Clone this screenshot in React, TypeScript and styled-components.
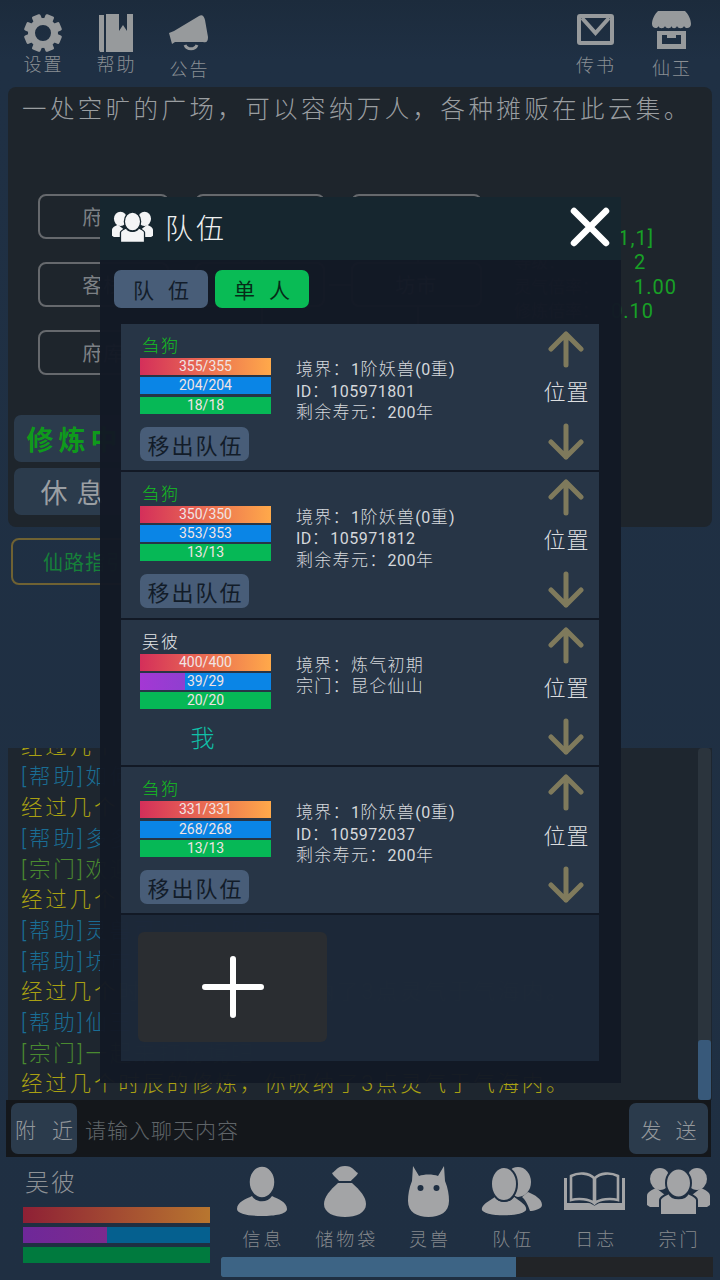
import React from "react";
import styled, { createGlobalStyle } from "styled-components";

const cjk = `Roboto, "Noto Sans CJK SC", sans-serif`;

const Global = createGlobalStyle`
  html, body { margin: 0; padding: 0; background: #1f2f42; }
  * { box-sizing: border-box; }
  body { font-family: ${cjk}; }
`;

const Page = styled.div`
  position: relative;
  width: 720px;
  height: 1280px;
  overflow: hidden;
  display: flex;
  flex-direction: column;
  background: linear-gradient(#1c2b3c, #1f3044 60px, #1f2f42);
`;

/* top bar */
const TopBar = styled.header`
  height: 87px;
  flex: none;
  display: flex;
  justify-content: space-between;
  padding: 0 11px 0 6px;
`;
const TopGroup = styled.div`
  display: flex;
`;
const TopItem = styled.div<{ $w: number; $pt: number; $gap: number }>`
  width: ${(p) => p.$w}px;
  padding-top: ${(p) => p.$pt}px;
  display: flex;
  flex-direction: column;
  align-items: center;
  gap: ${(p) => p.$gap}px;
`;
const TopLabel = styled.span`
  font-size: 18px;
  line-height: 22px;
  letter-spacing: 2px;
  margin-right: -2px;
  color: #8a8f94;
  font-weight: 300;
`;

/* scene */
const Scene = styled.section`
  height: 440px;
  flex: none;
  margin: 0 8px;
  background: #1e252c;
  border-radius: 8px;
  padding-top: 8px;
  display: flex;
  flex-direction: column;
`;
const Description = styled.p`
  margin: 0;
  padding-left: 14px;
  height: 99px;
  font-size: 24.5px;
  line-height: 30px;
  letter-spacing: 3.4px;
  white-space: nowrap;
  color: #9a9ea1;
  font-weight: 300;
`;
const MapRow = styled.div`
  display: flex;
  height: 181px;
`;
const MapGrid = styled.div`
  display: grid;
  grid-template-columns: repeat(3, 130.5px);
  grid-template-rows: 45px 45px 45px;
  column-gap: 26px;
  row-gap: 23px;
  margin-left: 30px;
  width: 474px;
`;
const MapNode = styled.div<{ $linkLeft?: boolean; $linkDown?: boolean }>`
  position: relative;
  border: 2px solid #66696d;
  border-radius: 8px;
  display: flex;
  align-items: center;
  justify-content: center;
  font-size: 20px;
  letter-spacing: 1px;
  color: #7c8084;
  &::before {
    content: ${(p) => (p.$linkLeft ? '""' : "none")};
    position: absolute;
    left: -24px;
    top: 20px;
    width: 22px;
    height: 2px;
    background: #66696d;
  }
  &::after {
    content: ${(p) => (p.$linkDown ? '""' : "none")};
    position: absolute;
    left: 64px;
    bottom: -25px;
    width: 2px;
    height: 23px;
    background: #66696d;
  }
`;
const Stats = styled.div`
  margin-top: 31.5px;
  margin-left: 2px;
  display: flex;
  flex-direction: column;
`;
const Stat = styled.div`
  display: flex;
  height: 24.5px;
  line-height: 24.5px;
  font-size: 20px;
  white-space: nowrap;
`;
const StatLabel = styled.span`
  width: 106px;
  font-size: 17px;
  color: #5a5e62;
`;
const StatValue = styled.span<{ $shift: number }>`
  margin-left: ${(p) => p.$shift}px;
  letter-spacing: 1px;
  color: #18a026;
`;
const ActionRow = styled.div`
  margin: 40px 0 0 6px;
  display: flex;
  gap: 120px;
`;
const ActionColumn = styled.div`
  display: flex;
  flex-direction: column;
  gap: 6px;
`;
const ActionButton = styled.div<{ $active?: boolean; $spacing: number }>`
  width: 116px;
  height: 47px;
  border-radius: 7px;
  background: #2b3b4c;
  display: flex;
  align-items: center;
  justify-content: center;
  font-size: 27px;
  font-weight: ${(p) => (p.$active ? 700 : 400)};
  letter-spacing: ${(p) => p.$spacing}px;
  text-indent: ${(p) => p.$spacing}px;
  color: ${(p) => (p.$active ? "#0f9a1c" : "#9b9fa3")};
  white-space: nowrap;
`;
const WideAction = styled(ActionButton)`
  width: 200px;
  font-size: 20px;
  color: #62676b;
  font-weight: 400;
`;

/* middle */
const Middle = styled.section`
  height: 221px;
  flex: none;
  padding: 11px 0 0 11px;
`;
const GoldButton = styled.div`
  width: 170px;
  height: 47px;
  border: 2px solid #6f6233;
  border-radius: 8px;
  display: flex;
  align-items: center;
  padding-left: 30px;
  font-size: 20px;
  letter-spacing: 1px;
  color: #16803a;
`;

/* chat */
const Chat = styled.section`
  height: 352px;
  flex: none;
  margin: 0 8px;
  display: flex;
  background: #1e262f;
`;
const Log = styled.div`
  flex: 1;
  overflow: hidden;
  display: flex;
  flex-direction: column;
  justify-content: flex-end;
  padding-left: 13px;
`;
const LogLine = styled.div<{ $kind: "sys" | "help" | "sect" }>`
  height: 30.7px;
  flex: none;
  line-height: 30.7px;
  font-size: 21.5px;
  letter-spacing: 2.8px;
  white-space: nowrap;
  font-weight: 300;
  color: ${(p) => (p.$kind === "sys" ? "#a9a012" : p.$kind === "help" ? "#1a6d94" : "#4a8a30")};
`;
const Track = styled.div`
  width: 13px;
  margin-right: 1px;
  background: #2b343d;
  display: flex;
  align-items: flex-end;
  border-radius: 4px;
`;
const Thumb = styled.div`
  width: 100%;
  height: 60px;
  background: #38597a;
  border-radius: 3px;
`;

/* input */
const InputBar = styled.section`
  height: 57px;
  flex: none;
  margin: 0 9px 0 6px;
  padding: 3px 3px 3px 5px;
  background: #14171b;
  display: flex;
  align-items: stretch;
`;
const InputButton = styled.div<{ $w: number; $spacing: number }>`
  width: ${(p) => p.$w}px;
  flex: none;
  border-radius: 7px;
  background: #2b3b4c;
  display: flex;
  align-items: center;
  justify-content: center;
  font-size: 21px;
  letter-spacing: ${(p) => p.$spacing}px;
  text-indent: ${(p) => p.$spacing}px;
  color: #94989c;
  white-space: nowrap;
  font-weight: 300;
`;
const Placeholder = styled.div`
  flex: 1;
  padding-left: 8px;
  display: flex;
  align-items: center;
  font-size: 21px;
  letter-spacing: 1px;
  color: #5f6468;
  font-weight: 300;
`;

/* bottom */
const Bottom = styled.footer`
  flex: 1;
  display: flex;
`;
const Player = styled.div`
  width: 221px;
  flex: none;
  padding: 10px 0 0 23px;
`;
const PlayerName = styled.div`
  font-size: 24px;
  line-height: 32px;
  letter-spacing: 2px;
  padding-left: 2px;
  color: #8e9296;
  font-weight: 300;
`;
const PlayerBars = styled.div`
  margin-top: 8px;
  width: 187px;
  display: flex;
  flex-direction: column;
  gap: 4px;
`;
const PlayerBar = styled.div<{ $bg: string }>`
  height: 16px;
  background: ${(p) => p.$bg};
`;
const Nav = styled.div`
  flex: 1;
  display: flex;
  flex-direction: column;
`;
const NavItems = styled.div`
  display: grid;
  grid-template-columns: repeat(6, 83.2px);
  height: 100px;
  margin-left: -0.5px;
`;
const NavItem = styled.div`
  display: flex;
  flex-direction: column;
  align-items: center;
  padding-top: 8px;
`;
const NavIconBox = styled.div`
  height: 52px;
  display: flex;
  align-items: center;
  justify-content: center;
`;
const NavLabel = styled.span`
  margin-top: 12px;
  font-size: 18px;
  line-height: 22px;
  letter-spacing: 3px;
  margin-right: -3px;
  color: #85898d;
  white-space: nowrap;
  font-weight: 300;
`;
const NavScroll = styled.div`
  width: 492px;
  height: 20px;
  background: #222427;
`;
const NavThumb = styled.div`
  width: 295px;
  height: 100%;
  background: #3d6485;
  border-radius: 2px 0 0 2px;
`;

/* modal */
const Modal = styled.div`
  position: absolute;
  left: 100px;
  top: 197px;
  width: 521px;
  height: 886px;
  display: flex;
  flex-direction: column;
  background: rgba(18, 25, 37, 0.975);
`;
const ModalHeader = styled.div`
  height: 63px;
  flex: none;
  background: #16262f;
  display: flex;
  align-items: center;
  padding: 0 11px 3px 12px;
`;
const ModalTitle = styled.h2`
  margin: 0 0 0 12px;
  flex: 1;
  font-size: 28px;
  font-weight: 300;
  letter-spacing: 3px;
  color: #eef0f1;
`;
const ModalBody = styled.div`
  flex: 1;
  padding: 10px 0 0 14px;
`;
const Tabs = styled.div`
  display: flex;
  gap: 7px;
`;
const Tab = styled.div<{ $on?: boolean }>`
  width: 94px;
  height: 38px;
  border-radius: 7px;
  background: ${(p) => (p.$on ? "#09bb55" : "#485d78")};
  color: ${(p) => (p.$on ? "#062a18" : "#131d2b")};
  display: flex;
  align-items: center;
  justify-content: center;
  font-size: 21px;
  letter-spacing: 14px;
  text-indent: 14px;
  white-space: nowrap;
`;
const Rows = styled.div`
  margin: 16px 0 0 7px;
  width: 478px;
  display: flex;
  flex-direction: column;
  gap: 2px;
`;
const Row = styled.div`
  height: 145.75px;
  background: #273546;
  display: flex;
`;
const EmptyRow = styled.div`
  height: 145.75px;
  background: rgba(36, 52, 72, 0.55);
  padding: 17px 0 0 17px;
`;
const AddButton = styled.div`
  width: 189px;
  height: 110px;
  background: #2a2d31;
  border-radius: 6px;
  display: flex;
  align-items: center;
  justify-content: center;
`;
const Left = styled.div`
  width: 175px;
  flex: none;
  padding: 10px 0 0 19px;
`;
const MemberName = styled.div<{ $me?: boolean }>`
  height: 24px;
  line-height: 24px;
  padding-left: 2px;
  font-size: 17px;
  letter-spacing: 2px;
  color: ${(p) => (p.$me ? "#e4e6e8" : "#14c020")};
  font-weight: 300;
`;
const Bars = styled.div`
  width: 131px;
  display: flex;
  flex-direction: column;
  gap: 2.3px;
`;
const Bar = styled.div<{ $bg: string }>`
  position: relative;
  height: 17px;
  background: ${(p) => p.$bg};
  display: flex;
  align-items: center;
  justify-content: center;
  font-size: 14px;
  line-height: 17px;
  color: #f0e4e4;
`;
const BarFill = styled.div`
  position: absolute;
  left: 0;
  top: 0;
  bottom: 0;
  background: linear-gradient(90deg, #a437d4, #8f3fd0);
`;
const BarText = styled.span`
  position: relative;
`;
const RemoveButton = styled.div`
  margin-top: 13px;
  width: 109px;
  height: 34px;
  border-radius: 7px;
  background: #485d78;
  display: flex;
  align-items: center;
  justify-content: center;
  font-size: 22px;
  letter-spacing: 2px;
  text-indent: 2px;
  color: #121c29;
  white-space: nowrap;
`;
const MeTag = styled.div`
  margin-top: 7px;
  width: 125px;
  height: 40px;
  display: flex;
  align-items: center;
  justify-content: center;
  font-size: 24px;
  color: #10c0a8;
  font-weight: 300;
`;
const Info = styled.div`
  flex: 1;
  padding-top: 35px;
  font-size: 17px;
  line-height: 21.5px;
  letter-spacing: 1.3px;
  color: #d5d8dc;
  white-space: nowrap;
  font-weight: 300;
`;
const InfoLine = styled.div`
  height: 21.5px;
`;
const Num = styled.span`
  font-size: 16px;
  letter-spacing: 0.5px;
  font-weight: 400;
`;
const Position = styled.div`
  width: 60px;
  margin-right: 3px;
  flex: none;
  display: flex;
  flex-direction: column;
  align-items: center;
  justify-content: space-between;
  padding: 6px 0 9px;
`;
const PositionLabel = styled.span`
  font-size: 22px;
  line-height: 26px;
  letter-spacing: 1px;
  margin: 0 -1px 4px 0;
  color: #dcdee0;
  font-weight: 300;
`;

/* icons */
const GREY = "#979a9c";
const NAVG = "#a3a4a6";
const BG = "#1f2f42";

const Gear = () => (
  <svg width="40" height="38" viewBox="-20 -19 40 38" style={{ display: "block" }}>
    {[0, 45, 90, 135, 180, 225, 270, 315].map((a) => (
      <rect key={a} x="-4.5" y="-19" width="9" height="10" rx="1.5" fill={GREY} transform={`rotate(${a + 22.5})`} />
    ))}
    <circle r="11.5" fill="none" stroke={GREY} strokeWidth="7" />
  </svg>
);
const HelpBook = () => (
  <svg width="34" height="38" viewBox="0 0 34 38" style={{ display: "block" }}>
    <path d="M0 1 H5 V38 H1 L0 36Z" fill={GREY} />
    <path d="M7 0 H20 V17 L24 11 L28 17 V0 H34 V38 H7Z" fill={GREY} />
  </svg>
);
const Horn = () => (
  <svg width="40" height="36" viewBox="0 0 40 36" style={{ display: "block" }}>
    <path d="M0 18 L5 16 L30 1 C33 -1 35 1 36 5 L39 22 C39 26 38 28 34 27 L6 27 L3 29Z" fill={GREY} />
    <path d="M16 30 C18 35 26 35 28 30" fill="none" stroke={GREY} strokeWidth="3" />
  </svg>
);
const Mail = () => (
  <svg width="37" height="31" viewBox="0 0 37 31" style={{ display: "block" }}>
    <rect x="2" y="2" width="33" height="27" rx="1" fill="none" stroke={GREY} strokeWidth="4" />
    <path d="M5 4 L18.5 19 L32 4" fill="none" stroke={GREY} strokeWidth="4" />
  </svg>
);
const Store = () => (
  <svg width="39" height="38" viewBox="0 0 39 38" style={{ display: "block" }}>
    <path d="M6 0 H33 C36 3 39 8 39 13 C39 18 33 18 32 15 C31 18 26 18 25 15 C24 18 20 18 19.5 15 C19 18 14 18 13 15 C12 18 7 18 6.5 15 C6 18 0 18 0 13 C0 8 3 3 6 0Z" fill={GREY} />
    <path fillRule="evenodd" d="M5 20 H34 V38 H5Z M10 24 V33 H29 V24 H24 V27 H15 V24Z" fill={GREY} />
  </svg>
);
const UpArrow = ({ down }: { down?: boolean }) => (
  <svg width="36" height="38" viewBox="0 0 36 38" style={{ display: "block", transform: down ? "rotate(180deg)" : undefined }}>
    <path d="M18 35 V4 M3 19 L18 4 L33 19" fill="none" stroke="#7f7a5c" strokeWidth="5" strokeLinecap="round" strokeLinejoin="round" />
  </svg>
);
const CloseX = () => (
  <svg width="40" height="40" viewBox="0 0 40 40" style={{ display: "block" }}>
    <path d="M4 4 L36 36 M36 4 L4 36" stroke="#fff" strokeWidth="6.5" strokeLinecap="round" />
  </svg>
);
const Plus = () => (
  <svg width="62" height="62" viewBox="0 0 62 62" style={{ display: "block" }}>
    <path d="M31 3 V59 M3 31 H59" stroke="#fff" strokeWidth="6" strokeLinecap="round" />
  </svg>
);
const Group3 = ({ w, h, fill, gap }: { w: number; h: number; fill: string; gap: string }) => (
  <svg width={w} height={h} viewBox="0 0 63 47" style={{ display: "block" }}>
    <ellipse cx="13" cy="11" rx="10" ry="11" fill={fill} />
    <ellipse cx="50" cy="11" rx="10" ry="11" fill={fill} />
    <path d="M0 37 V28 C0 24 5 22 9 20 L18 27 L12 39 L3 39Z" fill={fill} />
    <path d="M63 37 V28 C63 24 58 22 54 20 L45 27 L51 39 L60 39Z" fill={fill} />
    <path d="M13 47 V32 C13 29 18 27 22 25 C25 32 38 32 41 25 C45 27 50 29 50 32 V47Z" fill={fill} stroke={gap} strokeWidth="2" />
    <ellipse cx="31.5" cy="15" rx="12.5" ry="14.5" fill={fill} stroke={gap} strokeWidth="2" />
  </svg>
);
const Person = () => (
  <svg width="50" height="50" viewBox="0 0 50 50" style={{ display: "block" }}>
    <path d="M0 43 C0 36 9 33 15 30 C19 37 31 37 35 30 C41 33 50 36 50 43 C50 48 38 50 25 50 C12 50 0 48 0 43Z" fill={NAVG} />
    <ellipse cx="25" cy="16" rx="13" ry="16" fill={NAVG} stroke={BG} strokeWidth="1.5" />
  </svg>
);
const Bag = () => (
  <svg width="42" height="51" viewBox="0 0 42 51" style={{ display: "block" }}>
    <path d="M14 17 C6 24 0 31 0 38 C0 47 10 51 21 51 C32 51 42 47 42 38 C42 31 36 24 28 17Z" fill={NAVG} />
    <path d="M8 7 C12 5 13 0 21 0 C29 0 30 5 34 7 C32 11 28 13 27 15 H15 C14 13 10 11 8 7Z" fill={NAVG} />
  </svg>
);
const Cat = () => (
  <svg width="41" height="51" viewBox="0 0 41 51" style={{ display: "block" }}>
    <path d="M5 0 L11 10 C16 8 25 8 30 10 L36 0 L37 15 C40 22 41 29 41 35 C41 46 32 51 20.5 51 C9 51 0 46 0 35 C0 29 1 22 4 15Z" fill={NAVG} />
    <circle cx="12.5" cy="22" r="3" fill={BG} />
    <circle cx="28.5" cy="22" r="3" fill={BG} />
  </svg>
);
const Group2 = () => (
  <svg width="61" height="49" viewBox="0 0 61 49" style={{ display: "block" }}>
    <ellipse cx="37" cy="15" rx="13" ry="15" fill={NAVG} />
    <path d="M47 25 C54 28 61 32 61 38 C61 42 52 44 49 44 C47 38 44 32 41 30Z" fill={NAVG} />
    <path d="M0 42 C0 36 9 33 14 29 C18 36 29 36 33 29 C38 33 46 36 46 42 C46 47 34 49 23 49 C12 49 0 47 0 42Z" fill={NAVG} stroke={BG} strokeWidth="1.5" />
    <ellipse cx="23" cy="17" rx="13" ry="17" fill={NAVG} stroke={BG} strokeWidth="2" />
  </svg>
);
const OpenBook = () => (
  <svg width="61" height="38" viewBox="0 0 61 38" style={{ display: "block" }}>
    <path d="M0 6 H3 V31 H24 C27 31 29 33 30.5 34 C32 33 34 31 37 31 H58 V6 H61 V38 H0Z" fill={NAVG} />
    <path d="M7 4 C15 0 25 1 30 6 V31 C25 27 15 26 7 28Z M54 4 C46 0 36 1 31 6 V31 C36 27 46 26 54 28Z" fill="none" stroke={NAVG} strokeWidth="2.6" />
  </svg>
);

/* data */
const HP = "linear-gradient(90deg, #d42f5a, #ffa94a)";
const MP = "#0a85e6";
const SP = "#06b856";

type Member = {
  name: string;
  me?: boolean;
  hp: string;
  mp: string;
  sp: string;
  fill?: number;
  info: React.ReactNode[];
};

const beast = (id: string) => [
  <>境界：<Num>1</Num>阶妖兽<Num>(0</Num>重<Num>)</Num></>,
  <><Num>ID</Num>：<Num>{id}</Num></>,
  <>剩余寿元：<Num>200</Num>年</>,
];

const members: Member[] = [
  { name: "刍狗", hp: "355/355", mp: "204/204", sp: "18/18", info: beast("105971801") },
  { name: "刍狗", hp: "350/350", mp: "353/353", sp: "13/13", info: beast("105971812") },
  { name: "吴彼", me: true, hp: "400/400", mp: "39/29", sp: "20/20", fill: 34, info: [<>境界：炼气初期</>, <>宗门：昆仑仙山</>] },
  { name: "刍狗", hp: "331/331", mp: "268/268", sp: "13/13", info: beast("105972037") },
];

const SYS = "经过几个时辰的修炼，你吸纳了3点灵气于气海内。";
const log: { k: "sys" | "help" | "sect"; t: string }[] = [
  { k: "sys", t: SYS },
  { k: "help", t: "[帮助]如何才能提升修为" },
  { k: "sys", t: SYS },
  { k: "help", t: "[帮助]多多打坐修炼即可" },
  { k: "sect", t: "[宗门]欢迎新弟子加入" },
  { k: "sys", t: SYS },
  { k: "help", t: "[帮助]灵兽可以加入队伍" },
  { k: "help", t: "[帮助]坊市可以买卖物品" },
  { k: "sys", t: SYS },
  { k: "help", t: "[帮助]仙玉可以在商店使用" },
  { k: "sect", t: "[宗门]一起来打秘境吧" },
  { k: "sys", t: SYS },
];

const navs: { label: string; icon: React.ReactNode }[] = [
  { label: "信息", icon: <Person /> },
  { label: "储物袋", icon: <Bag /> },
  { label: "灵兽", icon: <Cat /> },
  { label: "队伍", icon: <Group2 /> },
  { label: "日志", icon: <OpenBook /> },
  { label: "宗门", icon: <Group3 w={63} h={47} fill={NAVG} gap={BG} /> },
];

export default function App() {
  return (
    <Page>
      <Global />
      <TopBar>
        <TopGroup>
          <TopItem $w={73} $pt={14} $gap={2}><Gear /><TopLabel>设置</TopLabel></TopItem>
          <TopItem $w={73} $pt={14} $gap={2}><HelpBook /><TopLabel>帮助</TopLabel></TopItem>
          <TopItem $w={73} $pt={15} $gap={8}><Horn /><TopLabel>公告</TopLabel></TopItem>
        </TopGroup>
        <TopGroup>
          <TopItem $w={76} $pt={14} $gap={10}><Mail /><TopLabel>传书</TopLabel></TopItem>
          <TopItem $w={76} $pt={11} $gap={9}><Store /><TopLabel>仙玉</TopLabel></TopItem>
        </TopGroup>
      </TopBar>

      <Scene>
        <Description>一处空旷的广场，可以容纳万人，各种摊贩在此云集。</Description>
        <MapRow>
          <MapGrid>
            <MapNode>府邸</MapNode>
            <MapNode $linkDown>广场</MapNode>
            <MapNode $linkDown>药铺</MapNode>
            <MapNode>客栈</MapNode>
            <MapNode $linkDown>街道</MapNode>
            <MapNode $linkLeft $linkDown>坊市</MapNode>
            <MapNode>府库</MapNode>
            <MapNode>商会</MapNode>
            <MapNode>拍卖</MapNode>
          </MapGrid>
          <Stats>
            <Stat><StatLabel>坐标：</StatLabel><StatValue $shift={-8}>[1,1]</StatValue></Stat>
            <Stat><StatLabel>等级：</StatLabel><StatValue $shift={14}>2</StatValue></Stat>
            <Stat><StatLabel>灵气倍率：</StatLabel><StatValue $shift={14}>1.00</StatValue></Stat>
            <Stat><StatLabel>修炼倍率：</StatLabel><StatValue $shift={-9}>0.10</StatValue></Stat>
          </Stats>
        </MapRow>
        <ActionRow>
          <ActionColumn>
            <ActionButton $active $spacing={5}>修炼中</ActionButton>
            <ActionButton $spacing={9}>休息</ActionButton>
          </ActionColumn>
          <WideAction $spacing={2}>开始修炼</WideAction>
        </ActionRow>
      </Scene>

      <Middle>
        <GoldButton>仙路指引</GoldButton>
      </Middle>

      <Chat>
        <Log>
          {log.map((l, i) => (
            <LogLine key={i} $kind={l.k}>{l.t}</LogLine>
          ))}
        </Log>
        <Track><Thumb /></Track>
      </Chat>

      <InputBar>
        <InputButton $w={66} $spacing={16}>附近</InputButton>
        <Placeholder>请输入聊天内容</Placeholder>
        <InputButton $w={79} $spacing={14}>发送</InputButton>
      </InputBar>

      <Bottom>
        <Player>
          <PlayerName>吴彼</PlayerName>
          <PlayerBars>
            <PlayerBar $bg="linear-gradient(90deg, #8e2035, #b8762f)" />
            <PlayerBar $bg="linear-gradient(90deg, #6e2899 0, #7c2a8e 45%, #05608f 45%)" />
            <PlayerBar $bg="#007a3e" />
          </PlayerBars>
        </Player>
        <Nav>
          <NavItems>
            {navs.map((n) => (
              <NavItem key={n.label}>
                <NavIconBox>{n.icon}</NavIconBox>
                <NavLabel>{n.label}</NavLabel>
              </NavItem>
            ))}
          </NavItems>
          <NavScroll><NavThumb /></NavScroll>
        </Nav>
      </Bottom>

      <Modal>
        <ModalHeader>
          <Group3 w={41} h={32} fill="#f4f5f6" gap="#16262f" />
          <ModalTitle>队伍</ModalTitle>
          <CloseX />
        </ModalHeader>
        <ModalBody>
          <Tabs>
            <Tab>队伍</Tab>
            <Tab $on>单人</Tab>
          </Tabs>
          <Rows>
            {members.map((m, i) => (
              <Row key={i}>
                <Left>
                  <MemberName $me={m.me}>{m.name}</MemberName>
                  <Bars>
                    <Bar $bg={HP}><BarText>{m.hp}</BarText></Bar>
                    <Bar $bg={MP}>
                      {m.fill ? <BarFill style={{ width: `${m.fill}%` }} /> : null}
                      <BarText>{m.mp}</BarText>
                    </Bar>
                    <Bar $bg={SP}><BarText>{m.sp}</BarText></Bar>
                  </Bars>
                  {m.me ? <MeTag>我</MeTag> : <RemoveButton>移出队伍</RemoveButton>}
                </Left>
                <Info>
                  {m.info.map((line, j) => (
                    <InfoLine key={j}>{line}</InfoLine>
                  ))}
                </Info>
                <Position>
                  <UpArrow />
                  <PositionLabel>位置</PositionLabel>
                  <UpArrow down />
                </Position>
              </Row>
            ))}
            <EmptyRow>
              <AddButton><Plus /></AddButton>
            </EmptyRow>
          </Rows>
        </ModalBody>
      </Modal>
    </Page>
  );
}
